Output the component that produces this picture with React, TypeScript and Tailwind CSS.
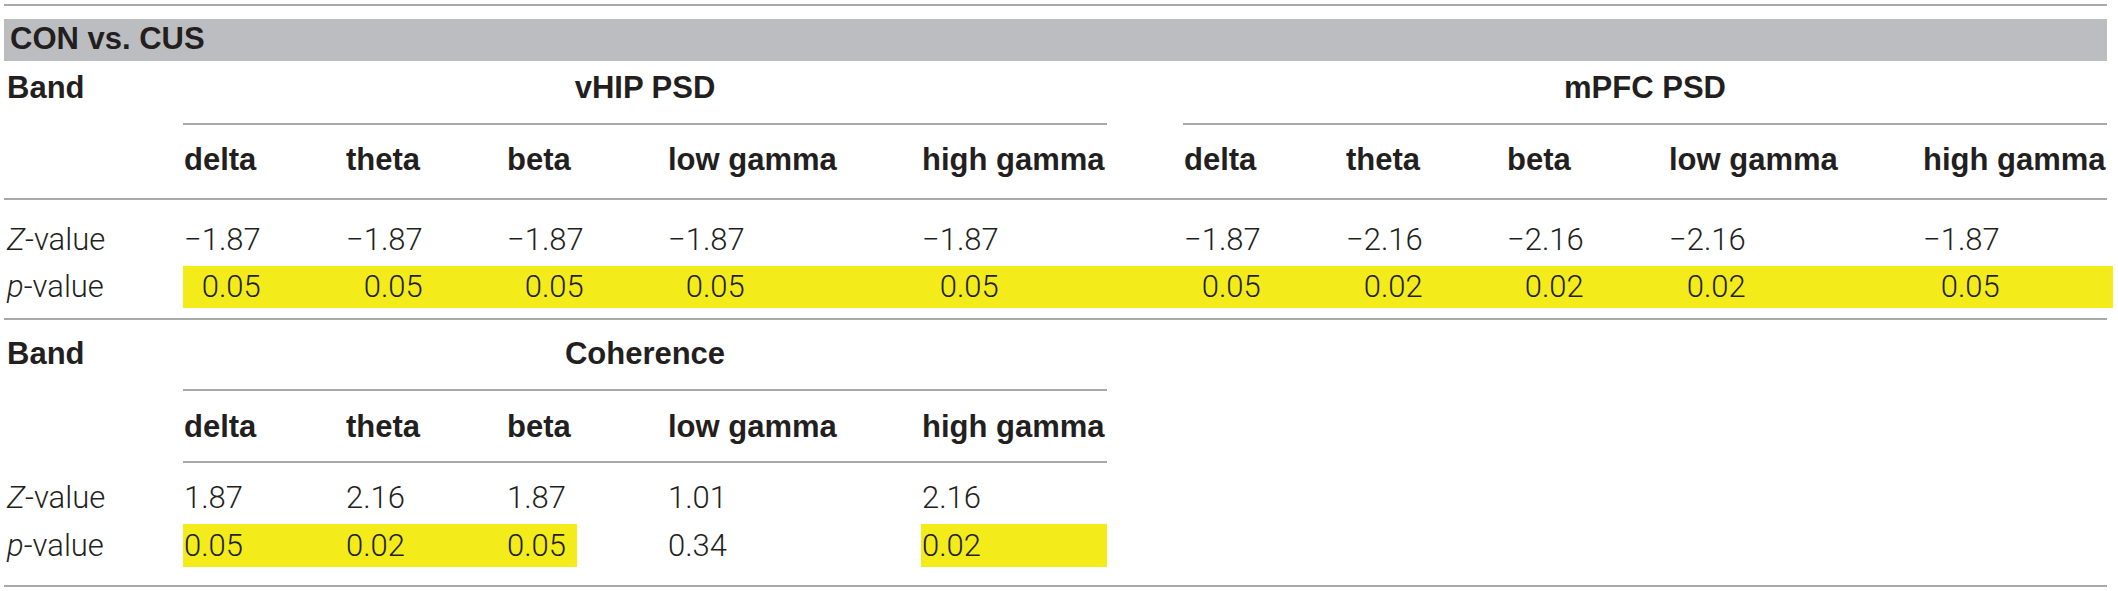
const HEAD = "font-['Liberation_Sans',Arial,sans-serif] font-bold text-[31px] leading-[34px] text-[#231f20] whitespace-nowrap";
const BODY = "font-['Roboto','Liberation_Sans',sans-serif] font-light text-[31px] leading-[34px] text-[#231f20] whitespace-nowrap";

const VHIP = ["w-[162px]", "w-[161px]", "w-[161px]", "w-[254px]", "w-[186px]"];
const MPFC = ["w-[162px]", "w-[161px]", "w-[162px]", "w-[254px]", "w-[185px]"];
const BANDS = ["delta", "theta", "beta", "low gamma", "high gamma"];

function Rule() {
  return <div className="h-[2px] w-full bg-[#a9a9a9]" />;
}

function SectionRule({ both }: { both: boolean }) {
  return (
    <div className="flex">
      <div className="w-[179px] shrink-0" />
      <div className="h-[2px] w-[924px] shrink-0 bg-[#a9a9a9]" />
      {both ? (
        <>
          <div className="w-[76px] shrink-0" />
          <div className="h-[2px] w-[924px] shrink-0 bg-[#a9a9a9]" />
        </>
      ) : null}
    </div>
  );
}

function Cells({ widths, values, cls }: { widths: string[]; values: React.ReactNode[]; cls: string }) {
  return (
    <>
      {values.map((v, i) => (
        <div key={i} className={`${widths[i]} shrink-0 pl-[1px] ${cls}`}>
          {v}
        </div>
      ))}
    </>
  );
}

function Neg({ v }: { v: string }) {
  return <>{"\u2212" + v}</>;
}

function Pos({ v }: { v: string }) {
  return (
    <>
      <span className="invisible">{"\u2212"}</span>
      {v}
    </>
  );
}

function ZLabel() {
  return (
    <div className={`w-[179px] shrink-0 pl-[3px] ${BODY}`}>
      <span className="italic">Z</span>-value
    </div>
  );
}

function PLabel({ pt }: { pt: string }) {
  return (
    <div className={`w-[179px] shrink-0 pl-[3px] ${pt} ${BODY}`}>
      <span className="italic">p</span>-value
    </div>
  );
}

export default function App() {
  const zV = ["1.87", "1.87", "1.87", "1.87", "1.87"];
  const pV = ["0.05", "0.05", "0.05", "0.05", "0.05"];
  const zM = ["1.87", "2.16", "2.16", "2.16", "1.87"];
  const pM = ["0.05", "0.02", "0.02", "0.02", "0.05"];

  return (
    <div className="min-h-[591px] w-[2118px] bg-white">
      <div className="ml-[4px] w-[2103px] pt-[4px]">
        <Rule />
        <div className={`mt-[13px] h-[42px] bg-[#bcbdc0] pl-[6px] pt-[3px] ${HEAD}`}>CON vs. CUS</div>

        {/* PSD table */}
        <div className="flex h-[62px] pt-[10px]">
          <div className={`w-[179px] shrink-0 pl-[3px] ${HEAD}`}>Band</div>
          <div className={`w-[924px] shrink-0 text-center ${HEAD}`}>vHIP PSD</div>
          <div className="w-[76px] shrink-0" />
          <div className={`w-[924px] shrink-0 text-center ${HEAD}`}>mPFC PSD</div>
        </div>
        <SectionRule both />
        <div className="flex h-[73px] pt-[18px]">
          <div className="w-[179px] shrink-0" />
          <Cells widths={VHIP} values={BANDS} cls={HEAD} />
          <div className="w-[76px] shrink-0" />
          <Cells widths={MPFC} values={BANDS} cls={HEAD} />
        </div>
        <Rule />
        <div className="flex h-[66px] pt-[23px]">
          <ZLabel />
          <Cells widths={VHIP} values={zV.map((v) => <Neg v={v} />)} cls={BODY} />
          <div className="w-[76px] shrink-0" />
          <Cells widths={MPFC} values={zM.map((v) => <Neg v={v} />)} cls={BODY} />
        </div>
        <div className="flex h-[42px]">
          <PLabel pt="pt-[4px]" />
          <div className="flex w-[1930px] shrink-0 bg-[#f4ec1a] pt-[4px]">
            <Cells widths={VHIP} values={pV.map((v) => <Pos v={v} />)} cls={BODY} />
            <div className="w-[76px] shrink-0" />
            <Cells widths={MPFC} values={pM.map((v) => <Pos v={v} />)} cls={BODY} />
          </div>
        </div>
        <div className="mt-[10px]">
          <Rule />
        </div>

        {/* Coherence table */}
        <div className="flex h-[69px] pt-[17px]">
          <div className={`w-[179px] shrink-0 pl-[3px] ${HEAD}`}>Band</div>
          <div className={`w-[924px] shrink-0 text-center ${HEAD}`}>Coherence</div>
        </div>
        <SectionRule both={false} />
        <div className="flex h-[70px] pt-[19px]">
          <div className="w-[179px] shrink-0" />
          <Cells widths={VHIP} values={BANDS} cls={HEAD} />
        </div>
        <SectionRule both={false} />
        <div className="flex h-[61px] pt-[18px]">
          <ZLabel />
          <Cells widths={VHIP} values={["1.87", "2.16", "1.87", "1.01", "2.16"]} cls={BODY} />
        </div>
        <div className="flex h-[43px]">
          <PLabel pt="pt-[5px]" />
          <div className={`w-[162px] shrink-0 bg-[#f4ec1a] pt-[5px] pl-[1px] ${BODY}`}>0.05</div>
          <div className={`w-[161px] shrink-0 bg-[#f4ec1a] pt-[5px] pl-[1px] ${BODY}`}>0.02</div>
          <div className="w-[161px] shrink-0">
            <div className={`h-full w-[71px] bg-[#f4ec1a] pt-[5px] pl-[1px] ${BODY}`}>0.05</div>
          </div>
          <div className={`w-[254px] shrink-0 pt-[5px] pl-[1px] ${BODY}`}>0.34</div>
          <div className={`w-[186px] shrink-0 bg-[#f4ec1a] pt-[5px] pl-[1px] ${BODY}`}>0.02</div>
        </div>
        <div className="mt-[18px]">
          <Rule />
        </div>
      </div>
    </div>
  );
}
